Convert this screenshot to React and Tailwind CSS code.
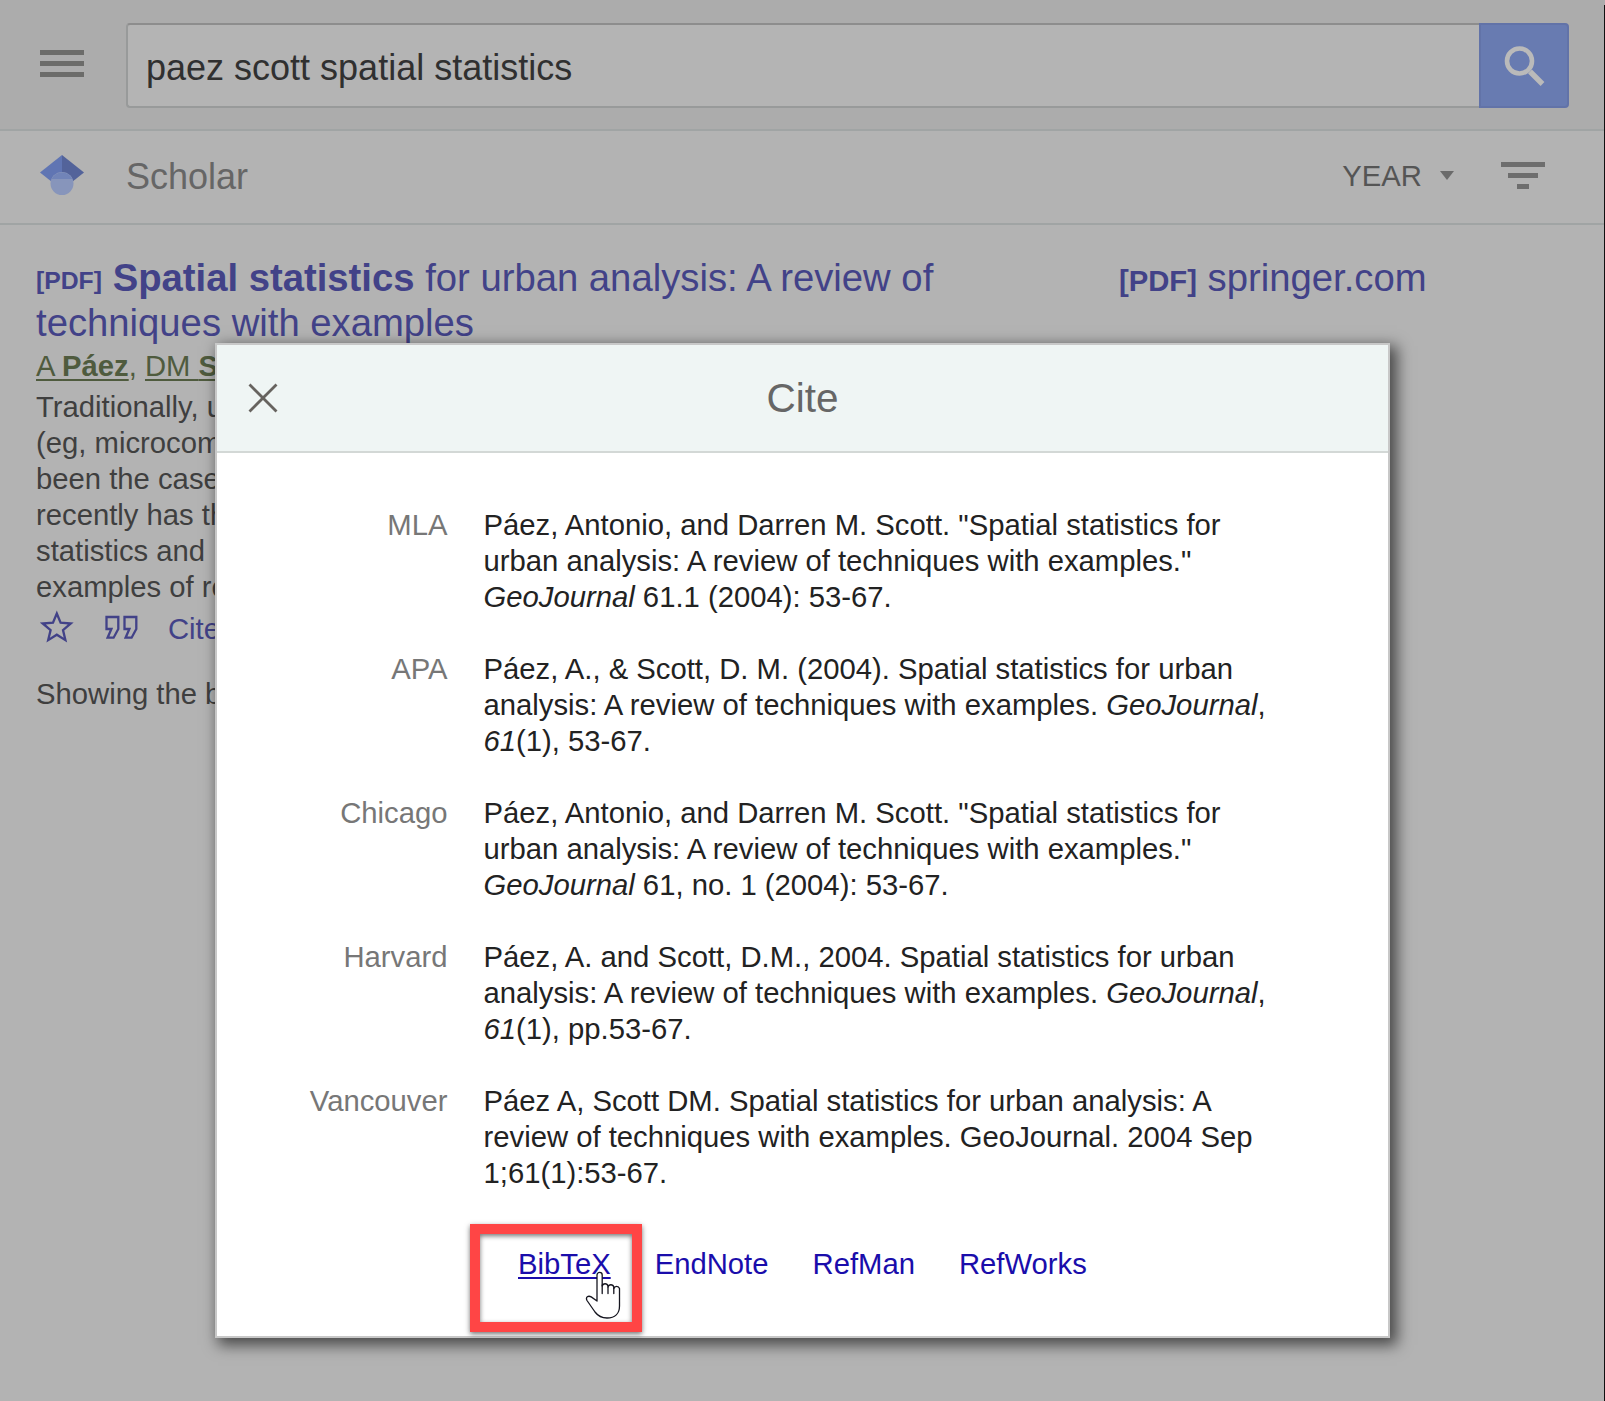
import React from "react";

const citations = [
  {
    style: "MLA",
    lines: [
      <>Páez, Antonio, and Darren M. Scott. "Spatial statistics for</>,
      <>urban analysis: A review of techniques with examples."</>,
      <><i>GeoJournal</i> 61.1 (2004): 53-67.</>,
    ],
  },
  {
    style: "APA",
    lines: [
      <>Páez, A., &amp; Scott, D. M. (2004). Spatial statistics for urban</>,
      <>analysis: A review of techniques with examples. <i>GeoJournal</i>,</>,
      <><i>61</i>(1), 53-67.</>,
    ],
  },
  {
    style: "Chicago",
    lines: [
      <>Páez, Antonio, and Darren M. Scott. "Spatial statistics for</>,
      <>urban analysis: A review of techniques with examples."</>,
      <><i>GeoJournal</i> 61, no. 1 (2004): 53-67.</>,
    ],
  },
  {
    style: "Harvard",
    lines: [
      <>Páez, A. and Scott, D.M., 2004. Spatial statistics for urban</>,
      <>analysis: A review of techniques with examples. <i>GeoJournal</i>,</>,
      <><i>61</i>(1), pp.53-67.</>,
    ],
  },
  {
    style: "Vancouver",
    lines: [
      <>Páez A, Scott DM. Spatial statistics for urban analysis: A</>,
      <>review of techniques with examples. GeoJournal. 2004 Sep</>,
      <>1;61(1):53-67.</>,
    ],
  },
];

const abstractLines = [
  "Traditionally, urba",
  "(eg, microcomp",
  "been the case f",
  "recently has the",
  "statistics and",
  "examples of rece",
];

function TopBar() {
  return (
    <header className="flex h-[131px] items-start border-b-2 border-[#a0a4a4] bg-[#acacac] pt-[23px] pl-10">
      <button className="mt-[27px] flex w-11 flex-col gap-[6px]" aria-label="Menu">
        <span className="h-[5px] w-11 bg-[#6c6c6a]" />
        <span className="h-[5px] w-11 bg-[#6c6c6a]" />
        <span className="h-[5px] w-11 bg-[#6c6c6a]" />
      </button>
      <div className="ml-[42px] flex h-[85px] w-[1443px]">
        <div className="flex w-[1353px] items-center rounded-l-[4px] border-2 border-r-0 border-[#989a9a] border-t-[#8d8d8d] bg-[#b4b4b4] pt-1 pl-[18px] text-[36px] text-[#303030]">
          paez scott spatial statistics
        </div>
        <button className="w-[90px] rounded-r-[4px] border-2 border-[#6273a8] bg-[#687bb1]" aria-label="Search">
          <svg className="ml-[22px] mt-px" width="44" height="44" viewBox="0 0 44 44" fill="none" stroke="#bababa">
            <circle cx="16.5" cy="17" r="12.5" strokeWidth="4.6" />
            <path d="M27 27.500l12.5 12.5" strokeWidth="5.4" />
          </svg>
        </button>
      </div>
    </header>
  );
}

function ScholarBar() {
  return (
    <div className="flex h-[94px] items-center border-b-2 border-[#a0a4a4] pl-10">
      <svg className="-mt-[5px]" width="44" height="40" viewBox="0 0 44 40">
        <path d="M22 0L0 17.5l12 9.5h10z" fill="#6075b3" />
        <path d="M22 0l22 17.5L32 27H22z" fill="#53639a" />
        <circle cx="22" cy="28.5" r="11.5" fill="#8795bb" />
        <path d="M11.6 24a11.5 11.5 0 0 1 20.8 0z" fill="#7184b8" />
      </svg>
      <span className="ml-[42px] text-[36px] text-[#666]">Scholar</span>
      <div className="ml-auto flex items-center">
        <span className="mr-[18px] text-[29.25px] text-[#555]">YEAR</span>
        <span className="-mt-[3px] mr-[47px] border-x-[7.5px] border-t-[9px] border-x-transparent border-t-[#6b6b6b]" />
        <span className="-mt-[3px] mr-[60px] flex w-11 flex-col items-center gap-[6px]">
          <span className="h-[5px] w-11 bg-[#6e6e6e]" />
          <span className="h-[5px] w-[30px] bg-[#6e6e6e]" />
          <span className="h-[5px] w-3 bg-[#6e6e6e]" />
        </span>
      </div>
    </div>
  );
}

function Result() {
  return (
    <main className="flex pl-9 pt-[30px]">
      <div className="w-[1083px] whitespace-nowrap">
        <h3 className="text-[38.25px] leading-[45px] text-[#424288]">
          <span className="relative -top-[2px] text-[24.75px] font-bold leading-none">[PDF]</span>{" "}
          <b>Spatial statistics</b> for urban analysis: A review of
          <br />
          techniques with examples
        </h3>
        <p className="mt-[3px] h-[41px] text-[29.25px] leading-[36px] text-[#4f5b3e]">
          <span className="underline decoration-2 underline-offset-[3px]">A <b>Páez</b></span>,{" "}
          <span className="underline decoration-2 underline-offset-[3px]">DM <b>Scott</b></span>
        </p>
        <div className="text-[29.25px] leading-[36px] text-[#3f3f3f]">
          {abstractLines.map((line) => (
            <p key={line}>{line}</p>
          ))}
        </div>
        <div className="flex h-[67px] text-[29.25px] leading-[36px] text-[#424288]">
          <svg className="ml-[4px] mt-[5px]" width="34" height="34" viewBox="0 0 34 34" fill="none" stroke="#424288" strokeWidth="2.3">
            <path d="M16.8 3.5l3.8 9.200 10.2.8-7.8 6.6 2.4 10-8.6-5.4-8.6 5.4 2.4-10-7.8-6.6 10.2-.8z" />
          </svg>
          <svg className="ml-[30px] mt-[10px]" width="34" height="26" viewBox="0 0 34 26" fill="none" stroke="#424288" strokeWidth="2.3">
            <path d="M2.5 2h11.8v12L9.6 22.7H3.6L7.4 14H2.5zM20.5 2h11.8v12l-4.7 8.7h-6L25.4 14h-4.9z" />
          </svg>
          <span className="ml-[30px] pt-[6px]">Cited by</span>
        </div>
        <p className="pt-[4px] text-[29.25px] leading-[36px] text-[#3f3f3f]">Showing the best</p>
      </div>
      <div className="whitespace-nowrap text-[38.25px] leading-[45px] text-[#424288]">
        <span className="text-[29.25px] font-bold leading-none">[PDF]</span> springer.com
      </div>
    </main>
  );
}

function HandCursor() {
  return (
    <svg className="absolute left-[368px] top-[926px]" width="38" height="50" viewBox="0 0 38 50" fill="#fff" stroke="#15151f" strokeWidth="1.3" strokeLinejoin="round" strokeLinecap="round">
      <path d="M12 30V4a2.600 2.600 0 0 1 5.200 0v11a3 3 0 0 1 5.800 0v1a3 3 0 0 1 5.800 0v1.500a3 3 0 0 1 5.700 0V35c0 7.500-4.500 12-12.500 12-5.500 0-9-2-12-6L2 29.500c-1.700-3.300 1.200-5.300 4.200-3.600z" />
      <path d="M17.200 14v8.500M23 16v6.500M28.800 17v5.500" />
    </svg>
  );
}

function CiteDialog() {
  return (
    <section className="absolute left-[215px] top-[343px] h-[995px] w-[1175px] border-2 border-[#c8c8c8] bg-white shadow-[5px_5px_14px_2px_rgba(0,0,0,0.6)]" role="dialog" aria-label="Cite">
      <header className="flex h-[108px] items-center border-b-2 border-[#d3d8d6] bg-[#eff5f4]">
        <svg className="ml-[31px]" width="30" height="30" viewBox="0 0 30 30" stroke="#67635f" strokeWidth="2.800">
          <path d="M1.500 1.500l27 27M28.500 1.500l-27 27" />
        </svg>
        <h2 className="mr-[61px] flex-1 text-center text-[40.5px] text-[#666]">Cite</h2>
      </header>
      <div className="flex flex-col gap-9 pt-[54px] text-[29.25px] leading-[36px]">
        {citations.map(({ style, lines }) => (
          <div className="flex gap-9" key={style}>
            <div className="w-[230.500px] text-right text-[#777]">{style}</div>
            <div className="whitespace-nowrap text-[#222]">
              {lines.map((line, i) => (
                <p key={i}>{line}</p>
              ))}
            </div>
          </div>
        ))}
      </div>
      <nav className="mt-[55px] flex gap-[44px] pl-[301px] text-[29.25px] leading-[36px] text-[#1a0dab]">
        <a className="underline decoration-2 underline-offset-[3px]">BibTeX</a>
        <a>EndNote</a>
        <a>RefMan</a>
        <a>RefWorks</a>
      </nav>
      <div className="absolute left-[253px] top-[879px] h-[108px] w-[172px] border-[10px] border-[#ff4545] shadow-[0_2px_5px_rgba(0,0,0,0.55),inset_0_2px_5px_rgba(0,0,0,0.55)]" />
      <HandCursor />
    </section>
  );
}

export default function App() {
  return (
    <div className="relative h-[1401px] w-[1605px] overflow-hidden bg-[#b3b3b3] font-['Liberation_Sans',Arial,sans-serif]">
      <TopBar />
      <ScholarBar />
      <Result />
      <CiteDialog />
      <div className="absolute right-0 top-[5px] h-[1396px] w-px bg-[#111]" />
    </div>
  );
}
